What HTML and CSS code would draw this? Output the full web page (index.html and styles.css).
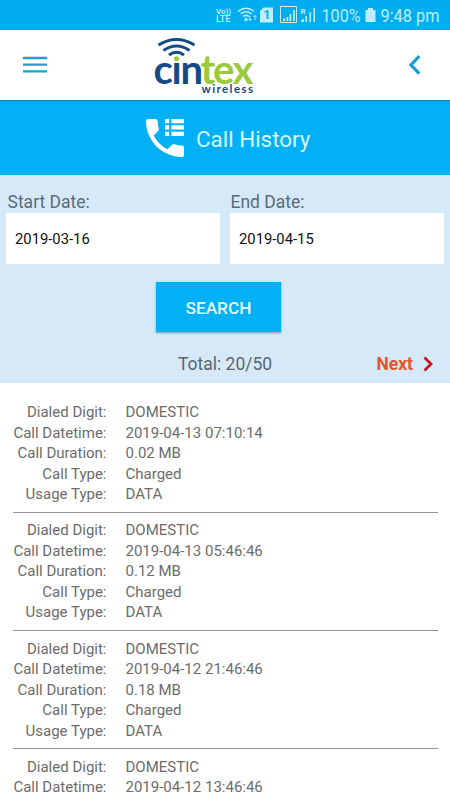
FILE: index.html
```html
<!DOCTYPE html>
<html lang="en">
<head>
<meta charset="utf-8">
<title>Call History</title>
<link rel="stylesheet" href="styles.css">
</head>
<body>
<div class="status">
  <svg width="240" height="30" viewBox="210 0 240 30">
    <g fill="#b9efff" font-family="Roboto, sans-serif">
      <text x="216" y="13.500" font-size="7.500" font-weight="700" textLength="15" lengthAdjust="spacingAndGlyphs">Vo))</text>
      <text x="216" y="22.300" font-size="8.500" font-weight="500" textLength="14.500" lengthAdjust="spacingAndGlyphs">LTE</text>
      <text x="321.500" y="22.300" font-size="19" textLength="39" lengthAdjust="spacingAndGlyphs">100%</text>
      <text x="380.500" y="22.300" font-size="19" textLength="59" lengthAdjust="spacingAndGlyphs">9:48 pm</text>
      <text x="300.500" y="14" font-size="8" font-weight="700">R</text>
      <path d="M263.500 7.500h9.500v15H260V11z"/>
      <path d="M368 8h5v2h2.500v12h-10V10H368z"/>
      <path d="M283 21v-2l2-1v3zM286.500 21v-4h1.800v4zM289.500 21v-7h1.800v7zM293 21V10h1.800v11z"/>
      <path d="M301 22v-1.500l3-2V22zM305.500 22v-6h1.500v6zM309.500 22V12h1.500v10zM313.500 22V8h1.500v14z"/>
      <circle cx="246" cy="19.500" r="1.700"/>
    </g>
    <text x="263.500" y="19.300" font-family="Roboto, sans-serif" font-size="12" font-weight="700" fill="#02adef">1</text>
    <g fill="none" stroke="#b9efff" stroke-width="1.600">
      <path d="M238 11.500q8-6.500 16 0M240.500 14q5.500-4.500 11 0M243 16.500q3-2.300 6 0"/>
      <path d="M250 16v4.500M248.500 19l1.500 1.500 1.500-1.500M255 20v-4.500M253.500 17l1.500-1.500 1.500 1.500" stroke-width="1"/>
      <path d="M280.500 6.500h16v16h-16z" stroke-width="1"/>
    </g>
  </svg>
</div>
<header class="appbar">
  <svg class="menu" width="24" height="18" viewBox="0 0 24 18"><path d="M0 2h24M0 8.700h24M0 15.400h24" stroke="#229fce" stroke-width="2.300"/></svg>
  <svg class="logo" width="110" height="64" viewBox="148 34 110 64">
    <g fill="none" stroke="#144b85" stroke-width="3">
      <path d="M158.500 45Q176.500 34 194.500 45"/>
      <path d="M163.500 50.500Q176.500 41.500 189.500 50.500"/>
      <path d="M169 55Q176.500 49.500 184 55"/>
    </g>
    <g font-family="Lato, sans-serif" font-weight="700">
      <text x="153.500 171.500 180.500" y="83.500" font-size="40" fill="#144b85">cın</text>
      <text x="200.500 213 232.500" y="83.500" font-size="40" fill="#9aca3c">tex</text>
      <text x="201.500" y="93" font-size="11.500" fill="#144b85" textLength="51.500">wireless</text>
    </g>
    <circle cx="176.500" cy="58.700" r="2.500" fill="#9aca3c"/>
  </svg>
  <svg class="back" width="14" height="22" viewBox="0 0 14 22"><path d="M11.300 2.200 3 11l8.300 8.700" fill="none" stroke="#169fd4" stroke-width="3.200"/></svg>
</header>
<div class="title">
  <svg width="38" height="38" viewBox="3 3 18 18" fill="#fff"><path d="M6.620 10.790c1.440 2.830 3.760 5.150 6.590 6.590l2.200-2.200c.28-.28.670-.36 1.020-.25 1.120.37 2.320.57 3.570.57.55 0 1 .45 1 1V20c0 .55-.45 1-1 1C10.610 21 3 13.390 3 4c0-.55.450-1 1-1h3.500c.55 0 1 .450 1 1 0 1.250.200 2.450.570 3.570.11.350.030.740-.25 1.020zM12 3h2v2h-2zM15 3h6v2h-6zM12 6h2v2h-2zM15 6h6v2h-6zM12 9h2v2h-2zM15 9h6v2h-6z"/></svg>
  <h1>Call History</h1>
</div>
<section class="search">
  <div class="dates">
    <label>Start Date:<span class="field">2019-03-16</span></label>
    <label>End Date:<span class="field">2019-04-15</span></label>
  </div>
  <button>SEARCH</button>
  <div class="pager">
    <span class="total">Total: 20/50</span>
    <span class="next">Next <svg width="11" height="16" viewBox="0 0 11 16"><path d="M1.500 1.500 8 8l-6.500 6.500" fill="none" stroke="#c4161c" stroke-width="2.800"/></svg></span>
  </div>
</section>
<main>
  <dl><dt>Dialed Digit:</dt><dd>DOMESTIC</dd><dt>Call Datetime:</dt><dd>2019-04-13 07:10:14</dd><dt>Call Duration:</dt><dd>0.02 MB</dd><dt>Call Type:</dt><dd>Charged</dd><dt>Usage Type:</dt><dd>DATA</dd></dl>
  <dl><dt>Dialed Digit:</dt><dd>DOMESTIC</dd><dt>Call Datetime:</dt><dd>2019-04-13 05:46:46</dd><dt>Call Duration:</dt><dd>0.12 MB</dd><dt>Call Type:</dt><dd>Charged</dd><dt>Usage Type:</dt><dd>DATA</dd></dl>
  <dl><dt>Dialed Digit:</dt><dd>DOMESTIC</dd><dt>Call Datetime:</dt><dd>2019-04-12 21:46:46</dd><dt>Call Duration:</dt><dd>0.18 MB</dd><dt>Call Type:</dt><dd>Charged</dd><dt>Usage Type:</dt><dd>DATA</dd></dl>
  <dl><dt>Dialed Digit:</dt><dd>DOMESTIC</dd><dt>Call Datetime:</dt><dd>2019-04-12 13:46:46</dd></dl>
</main>
</body>
</html>
```
FILE: styles.css
```css
* { box-sizing: border-box; }
body {
  margin: 0;
  width: 450px;
  height: 800px;
  overflow: hidden;
  display: flex;
  flex-direction: column;
  background: #fff;
  font-family: Roboto, sans-serif;
}
svg { display: block; flex: none; }
.status {
  height: 30px;
  flex: none;
  display: flex;
  justify-content: flex-end;
  background: #02adef;
}
.appbar {
  height: 70px;
  flex: none;
  display: flex;
  align-items: flex-start;
  padding: 0 28px 0 23px;
}
.menu { margin-top: 26px; }
.logo { margin: 4px 0 0 101px; }
.back { margin: 24px 0 0 auto; }
.title {
  height: 75px;
  flex: none;
  display: flex;
  align-items: center;
  padding-left: 146px;
  gap: 12px;
  background: linear-gradient(#087fae, #02aaef 2px, #02b0f5 4px);
}
h1 {
  margin: 2px 0 0;
  font-size: 22.400px;
  line-height: 28px;
  font-weight: 400;
  color: #d5f8ff;
  white-space: nowrap;
}
.search {
  height: 207.500px;
  flex: none;
  padding: 16px 6px 0;
  background: #d5e9f8;
}
.dates {
  display: grid;
  grid-template-columns: 1fr 1fr;
  gap: 10px;
}
label {
  font-size: 17.500px;
  line-height: 22px;
  color: #5b6b78;
  text-indent: 1.500px;
}
label + label { text-indent: .5px; }
.field {
  display: block;
  height: 51px;
  padding-left: 8px;
  background: #fff;
  color: #111;
  font-size: 14.800px;
  line-height: 53px;
  text-indent: 1px;
}
button {
  display: block;
  width: 125px;
  height: 50px;
  margin: 18px 0 0 150px;
  border: 0;
  padding: 2px 0 0;
  background: #02b0f5;
  color: #e3faff;
  font: 500 17.300px Roboto, sans-serif;
  box-shadow: 0 1px 2px #7895a8;
}
.pager {
  display: grid;
  grid-template-columns: 1fr auto 1fr;
  align-items: center;
  margin-top: 21px;
  line-height: 22px;
  font-size: 17.500px;
  color: #5b6670;
}
.total { grid-column: 2; }
.next {
  display: flex;
  justify-content: flex-end;
  align-items: center;
  gap: 10px;
  padding-right: 10px;
  color: #e65529;
  font-weight: 700;
}
main { padding: 0 12.500px; }
dl {
  display: grid;
  grid-template-columns: 94px 1fr;
  column-gap: 19px;
  margin: 0;
  padding: 7.400px 0;
  font-size: 15px;
  line-height: 20.500px;
  color: #6c6c6c;
  white-space: nowrap;
}
dl:first-child { padding-top: 19.500px; }
dl + dl { border-top: 1px solid #949494; }
dt { text-align: right; }
dd { margin: 0; }
```
